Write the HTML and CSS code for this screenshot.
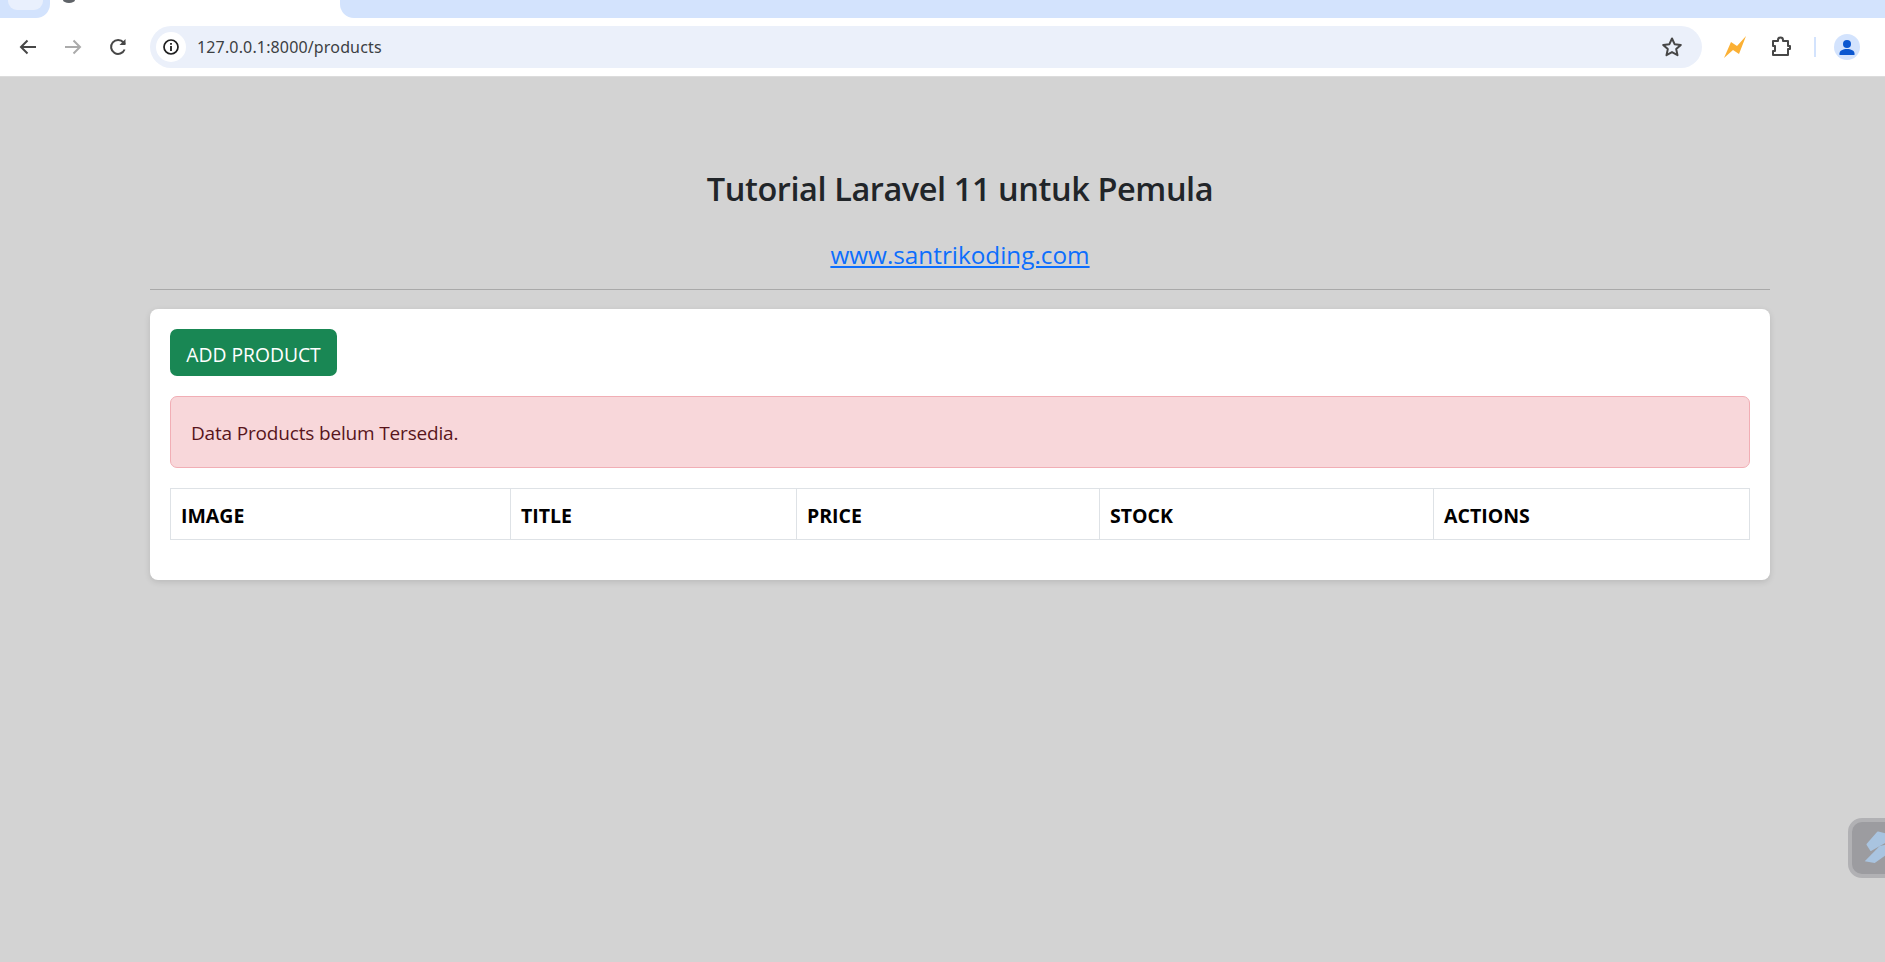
FILE: index.html
```html
<!DOCTYPE html>
<html lang="en">
<head>
<meta charset="utf-8">
<title>Products</title>
<link rel="stylesheet" href="styles.css">
</head>
<body>
<header class="chrome">
  <div class="tabstrip">
    <div class="strip-left"><span class="newtab-pill"></span></div>
    <div class="tab"><span class="tab-icon"></span></div>
    <div class="strip-right"></div>
  </div>
  <div class="toolbar">
    <div class="nav">
      <svg class="ico" viewBox="0 0 24 24"><path d="M20 12H5M11.5 5.500 5 12l6.500 6.500" fill="none" stroke="#474747" stroke-width="2"/></svg>
      <svg class="ico" viewBox="0 0 24 24"><path d="M4 12h15M12.500 5.500 19 12l-6.500 6.500" fill="none" stroke="#ababab" stroke-width="2"/></svg>
      <svg class="ico" viewBox="0 0 24 24"><path d="M18.600 14.500A7 7 0 1 1 17.500 7.500L19 9" fill="none" stroke="#474747" stroke-width="2"/><path d="M19.500 4v6h-6z" fill="#474747"/></svg>
    </div>
    <div class="omnibox">
      <span class="info"><svg viewBox="0 0 20 20" width="20" height="20"><circle cx="10" cy="10" r="7" fill="none" stroke="#1f1f1f" stroke-width="1.700"/><path d="M10 9v5M10 6v1.700" stroke="#1f1f1f" stroke-width="1.800"/></svg></span>
      <span class="url">127.0.0.1:8000/products</span>
      <svg class="star" viewBox="0 0 24 24"><path d="m12 3.500 2.600 5.700 6.200.700-4.600 4.200 1.300 6.100L12 17.100l-5.500 3.100 1.300-6.100-4.600-4.200 6.200-.700z" fill="none" stroke="#474747" stroke-width="2" stroke-linejoin="round"/></svg>
    </div>
    <div class="actions">
      <svg class="bolt" viewBox="0 0 24 24"><path d="M1 23 8 7l6 4 9-10-7 18-6-4z" fill="#fbb034"/></svg>
      <svg class="puzzle" viewBox="0 0 24 24"><path d="M4 6h5V5a2.500 2.500 0 0 1 5 0v1h5v5h2v3h-2v6H4v-4h2v-5H4z" fill="none" stroke="#474747" stroke-width="2" stroke-linejoin="round"/></svg>
      <span class="divider"></span>
      <span class="avatar"><svg viewBox="0 0 24 24" width="24" height="24"><circle cx="12" cy="9" r="4" fill="#0b57d0"/><path d="M4.500 20v-1.500C4.500 15.500 8 14 12 14s7.500 1.500 7.500 4.500V20z" fill="#0b57d0"/></svg></span>
    </div>
  </div>
</header>

<main class="container">
  <div class="heading">
    <h3 class="title">Tutorial Laravel 11 untuk Pemula</h3>
    <h5 class="subtitle"><a class="link" href="#">www.santrikoding.com</a></h5>
    <hr class="rule">
  </div>
  <section class="card">
    <a class="btn" href="#">ADD PRODUCT</a>
    <div class="alert">Data Products belum Tersedia.</div>
    <table class="table">
      <thead>
        <tr>
          <th class="col-image">IMAGE</th>
          <th class="col-title">TITLE</th>
          <th class="col-price">PRICE</th>
          <th class="col-stock">STOCK</th>
          <th>ACTIONS</th>
        </tr>
      </thead>
    </table>
  </section>
</main>

<div class="widget">
  <svg viewBox="0 0 37 50" width="37" height="50"><path d="M11.500 17.500 22 5.500l8 2v7L15 23z" fill="#a9c4e0" stroke="#a9c4e0" stroke-width="2" stroke-linejoin="round"/><path d="M8.700 34.300 23.700 19l7-1.500v10L18.700 36z" fill="#a9c4e0"/></svg>
</div>
</body>
</html>
```
FILE: styles.css
```css
* { box-sizing: border-box; }
html, body { margin: 0; height: 962px; }
body {
  overflow: hidden;
  background: #d3d3d3;
  font-family: "Open Sans", "Noto Sans", "Liberation Sans", sans-serif;
  color: #212529;
}

/* browser chrome */
.chrome { background: #fff; }
.tabstrip { display: flex; height: 18px; background: #fff; }
.strip-left {
  width: 50px;
  background: #d3e3fd;
  border-bottom-right-radius: 14px;
  padding-left: 8px;
}
.newtab-pill {
  display: block;
  width: 35px;
  height: 10px;
  background: #e9f0fd;
  border-radius: 0 0 9px 9px;
}
.tab { width: 290px; padding-left: 13px; }
.tab-icon { display: block; width: 12px; height: 3px; background: #5f6368; border-radius: 0 0 6px 6px / 0 0 3px 3px; }
.strip-right { flex: 1; background: #d3e3fd; border-bottom-left-radius: 14px; }
.toolbar {
  display: flex;
  align-items: center;
  height: 59px;
  padding: 0 0 0 10px;
  background: #fff;
  border-bottom: 1px solid #dcdcdc;
}
.nav { display: flex; gap: 21px; width: 140px; padding-left: 6px; }
.ico { width: 24px; height: 24px; display: block; }
.omnibox {
  display: flex;
  align-items: center;
  width: 1552px;
  height: 42px;
  background: #ebf0fa;
  border-radius: 21px;
  padding: 0 18px 0 6px;
}
.info {
  display: flex;
  align-items: center;
  justify-content: center;
  width: 30px;
  height: 30px;
  background: #fff;
  border-radius: 50%;
}
.url {
  flex: 1;
  margin-left: 11px;
  font-family: "Noto Sans", "Liberation Sans", sans-serif;
  font-size: 16px;
  letter-spacing: 0.15px;
  color: #3c4043;
}
.star { width: 24px; height: 24px; }
.actions { display: flex; align-items: center; flex: 1; padding-left: 21px; }
.bolt { width: 24px; height: 24px; }
.puzzle { width: 24px; height: 24px; margin-left: 22px; }
.divider { width: 2px; height: 20px; background: #d3e3fd; margin-left: 21px; }
.avatar {
  display: flex;
  align-items: center;
  justify-content: center;
  width: 26px;
  height: 26px;
  margin-left: 18px;
  border-radius: 50%;
  background: #d3e3fd;
}

/* page */
.container { width: 1620px; margin-left: 150px; padding-top: 90px; }
.heading { text-align: center; }
.title { margin: 0; font-size: 32.500px; line-height: 44px; font-weight: 600; letter-spacing: -0.42px; color: #212529; }
.subtitle { margin: 28px 0 0; font-size: 24.300px; line-height: 32px; font-weight: 500; }
.link { color: #0d6efd; text-decoration: underline; }
.rule { margin: 18px 0 19px; border: 0; border-top: 1px solid #a9a9a9; }
.card {
  height: 271px;
  padding: 20px;
  background: #fff;
  border-radius: 8px;
  box-shadow: 0 2px 6px rgba(0, 0, 0, 0.12);
}
.btn {
  display: block;
  width: 167px;
  height: 47px;
  background: #198754;
  border-radius: 7px;
  color: #fff;
  font-size: 19.300px;
  line-height: 52px;
  text-align: center;
  text-decoration: none;
}
.alert {
  height: 72px;
  margin-top: 20px;
  padding: 0 20px;
  border: 1px solid #f1aeb5;
  border-radius: 7px;
  background: #f8d7da;
  color: #58151c;
  font-size: 19px;
  line-height: 73px;
  letter-spacing: -0.17px;
}
.table { width: 100%; margin-top: 20px; border-collapse: collapse; table-layout: fixed; }
.table th {
  height: 51px;
  padding: 2px 10px 0;
  border: 1px solid #dee2e6;
  background: #fff;
  color: #000;
  font-size: 19.500px;
  font-weight: 700;
  text-align: left;
}
.col-image { width: 340px; }
.col-title { width: 286px; }
.col-price { width: 303px; }
.col-stock { width: 334px; }

.widget {
  position: fixed;
  left: 1848px;
  top: 818px;
  width: 60px;
  height: 60px;
  padding-top: 5px;
  padding-left: 4px;
  border: 4px solid #b1b1b4;
  border-radius: 14px;
  background: #9c9ca0;
}
```
